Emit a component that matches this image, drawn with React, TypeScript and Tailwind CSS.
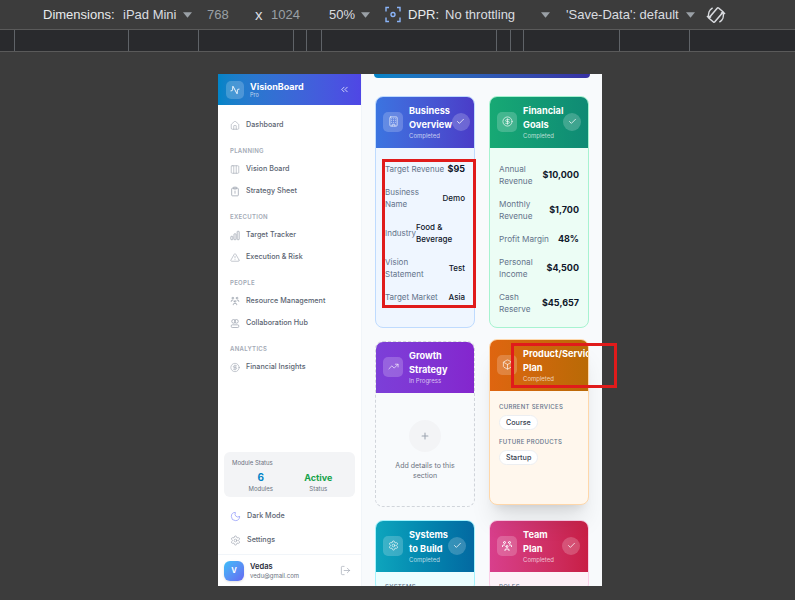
import {
  Home, Columns3, TriangleAlert, CircleDollarSign,
  Moon, Settings, LogOut, ChevronsLeft, Building, Check, TrendingUp, Box, Plus, Activity,
} from 'lucide-react';
import { TbUsersGroup } from 'react-icons/tb';
import type { ReactNode } from 'react';

const rulerStops = [15, 114, 70, 95, 13, 15, 175, 14, 13, 96, 70];

function Caret({ className = '' }: { className?: string }) {
  return (
    <svg viewBox="0 0 10 6" className={`h-[6px] w-[9px] shrink-0 fill-[#9aa0a6] ${className}`}>
      <polygon points="0,0 10,0 5,6" />
    </svg>
  );
}

function RotateIcon() {
  return (
    <svg viewBox="0 0 20 20" className="ml-[11px] h-[20px] w-[20px] shrink-0 fill-none stroke-[#dadce0] stroke-[1.5]">
      <rect x="6.5" y="3" width="7" height="14" rx="1" transform="rotate(40 10 10)" />
      <path d="M3 12.5c-1.2-3.6.2-7.6 3.6-9.6M17 7.5c1.2 3.6-.2 7.6-3.6 9.6" />
      <path d="M1 11l2 2 2-1.6M19 9l-2-2-2 1.6" />
    </svg>
  );
}

function Toolbar() {
  return (
    <div className="flex h-[30px] items-center border-b border-[#5a5a5a] text-[13px] leading-none whitespace-nowrap text-[#e8eaed]">
      <span className="ml-[43px] w-[80px]">Dimensions:</span>
      <span className="w-[60px] text-[#dadce0]">iPad Mini</span>
      <Caret />
      <span className="ml-[15px] w-[48px] text-[#9aa0a6]">768</span>
      <span className="w-[16px] text-[15px] text-[#dadce0]">x</span>
      <span className="w-[58px] text-[#9aa0a6]">1024</span>
      <span className="w-[32px] text-[#dadce0]">50%</span>
      <Caret />
      <svg viewBox="0 0 16 16" className="ml-[15px] h-[17px] w-[16px] shrink-0 fill-none stroke-[#8ab4f8] stroke-[1.4]">
        <path d="M1 5V1h3M12 1h3v4M15 11v4h-3M4 15H1v-4" />
        <circle cx="8" cy="8" r="2" />
      </svg>
      <span className="ml-[7px] w-[37px]">DPR:</span>
      <span className="w-[96px] text-[#dadce0]">No throttling</span>
      <Caret />
      <span className="ml-[16px] w-[120px] text-[#dadce0]">'Save-Data': default</span>
      <Caret />
      <RotateIcon />
    </div>
  );
}

function Ruler() {
  return (
    <div className="flex h-[22px] border-b border-[#5a5a5a] bg-[#292a2d]">
      {rulerStops.map((w, i) => (
        <div key={i} className="h-[21px] border-r border-[#5f6368]" style={{ width: w }} />
      ))}
    </div>
  );
}

function BarsIcon() {
  return (
    <svg viewBox="0 0 12 12" className="h-[11px] w-[11px] fill-none stroke-current stroke-[0.9]">
      <rect x="1" y="7" width="2.4" height="4" rx="0.5" />
      <rect x="4.8" y="4" width="2.4" height="7" rx="0.5" />
      <rect x="8.6" y="1" width="2.4" height="10" rx="0.5" />
    </svg>
  );
}

function ClipIcon() {
  return (
    <svg viewBox="0 0 12 12" className="h-[11px] w-[11px] fill-none stroke-current stroke-[0.9]">
      <rect x="2" y="2" width="8" height="9.2" rx="1" />
      <rect x="4" y="0.8" width="4" height="2.2" rx="0.5" />
      <path d="M6 5v3.6" />
    </svg>
  );
}

function CollabIcon() {
  return (
    <svg viewBox="0 0 12 12" className="h-[11px] w-[11px] fill-none stroke-current stroke-[0.9]">
      <circle cx="4.3" cy="3.4" r="2.2" />
      <circle cx="7.7" cy="3.4" r="2.2" />
      <rect x="1.5" y="7.6" width="9" height="3.2" rx="1.2" />
    </svg>
  );
}

function NavItem({ icon, label }: { icon: ReactNode; label: string }) {
  return (
    <div className="flex h-[22px] items-center gap-[6px] pl-[12px] text-[7.2px] font-medium text-[#5b6472]">
      <span className="flex w-[10px] justify-center text-[#9ca3af]">{icon}</span>
      {label}
    </div>
  );
}

function NavLabel({ children }: { children: string }) {
  return <div className="mt-[10px] mb-[2px] h-[10px] pl-[12px] text-[6px] leading-[10px] font-semibold tracking-[0.3px] text-[#a3aab5]">{children}</div>;
}

function Sidebar() {
  return (
    <aside className="flex w-[144px] shrink-0 flex-col border-r border-[#f1f5f9] bg-white">
      <div className="flex h-[31px] items-center bg-gradient-to-r from-[#0284c7] to-[#4f46e5] pr-[11px] pl-[8px]">
        <div className="flex h-[18px] w-[18px] items-center justify-center rounded-[5px] bg-white/20">
          <Activity size={10} className="-rotate-12 text-white" />
        </div>
        <div className="ml-[6px] flex-1 text-white">
          <div className="text-[9px] leading-[11px] font-bold">VisionBoard</div>
          <div className="text-[5.5px] leading-[6px] text-white/70">Pro</div>
        </div>
        <ChevronsLeft size={11} className="text-white/80" />
      </div>
      <div className="mt-[9px]">
        <NavItem icon={<Home size={11} strokeWidth={1.4} />} label="Dashboard" />
        <NavLabel>PLANNING</NavLabel>
        <NavItem icon={<Columns3 size={11} strokeWidth={1.4} />} label="Vision Board" />
        <NavItem icon={<ClipIcon />} label="Strategy Sheet" />
        <NavLabel>EXECUTION</NavLabel>
        <NavItem icon={<BarsIcon />} label="Target Tracker" />
        <NavItem icon={<TriangleAlert size={11} strokeWidth={1.4} />} label="Execution & Risk" />
        <NavLabel>PEOPLE</NavLabel>
        <NavItem icon={<TbUsersGroup size={12} />} label="Resource Management" />
        <NavItem icon={<CollabIcon />} label="Collaboration Hub" />
        <NavLabel>ANALYTICS</NavLabel>
        <NavItem icon={<CircleDollarSign size={11} strokeWidth={1.4} />} label="Financial Insights" />
      </div>
      <div className="mx-[6px] mt-auto rounded-[6px] bg-[#f3f4f6] px-[8px] pt-[7px] pb-[4px]">
        <div className="text-[6px] leading-[8px] text-[#6b7280]">Module Status</div>
        <div className="mt-[4px] grid grid-cols-2 text-center">
          <div>
            <div className="text-[10px] leading-[13px] font-bold text-[#0284c7]">6</div>
            <div className="text-[6px] leading-[9px] text-[#6b7280]">Modules</div>
          </div>
          <div>
            <div className="text-[9px] leading-[13px] font-bold text-[#16a34a]">Active</div>
            <div className="text-[6px] leading-[9px] text-[#6b7280]">Status</div>
          </div>
        </div>
      </div>
      <div className="mt-[7px] flex h-[24px] items-center gap-[6px] pl-[12px] text-[7.2px] font-medium text-[#5b6472]">
        <Moon size={11} strokeWidth={1.4} className="text-[#818cf8]" />
        Dark Mode
      </div>
      <div className="flex h-[24px] items-center gap-[6px] pl-[12px] text-[7.2px] font-medium text-[#5b6472]">
        <Settings size={11} strokeWidth={1.4} className="text-[#9ca3af]" />
        Settings
      </div>
      <div className="mt-[2px] flex h-[32px] items-center border-t border-[#f1f5f9] pr-[10px] pl-[6px]">
        <div className="flex h-[20px] w-[20px] items-center justify-center rounded-[6px] bg-gradient-to-br from-[#38bdf8] to-[#6366f1] text-[7.5px] font-bold text-white shadow-sm">
          V
        </div>
        <div className="ml-[6px] flex-1">
          <div className="text-[7.5px] leading-[9px] font-semibold text-[#1f2937]">Vedas</div>
          <div className="mt-[1px] text-[6px] leading-[8px] text-[#6b7280]">vedu@gmail.com</div>
        </div>
        <LogOut size={11} strokeWidth={1.4} className="text-[#9ca3af]" />
      </div>
    </aside>
  );
}

function CardHeader({ icon, title, status, gradient, done = true }: { icon: ReactNode; title: string; status: string; gradient: string; done?: boolean }) {
  return (
    <div className={`flex items-center pt-[6.5px] pr-[8px] pb-[8.5px] pl-[7px] text-white ${gradient}`}>
      <div className="mr-[6px] flex h-[20px] w-[20px] shrink-0 items-center justify-center rounded-[5px] bg-white/20">{icon}</div>
      <div className="flex-1">
        <div className="text-[9.2px] leading-[14px] font-bold">{title}</div>
        <div className="text-[6px] leading-[8px] text-white/70">{status}</div>
      </div>
      {done && (
        <div className="flex h-[18px] w-[18px] shrink-0 items-center justify-center rounded-full bg-white/20">
          <Check size={9} strokeWidth={2} />
        </div>
      )}
    </div>
  );
}

function Row({ label, value, labelWidth }: { label: string; value: string; labelWidth?: string }) {
  return (
    <div className="flex items-center justify-between">
      <div className={`text-[8.2px] leading-[12px] text-[#64748b] ${labelWidth ?? ''}`}>{label}</div>
      <div className="text-[9px] leading-[12px] font-bold text-[#0f172a]">{value}</div>
    </div>
  );
}

function SmallRow({ label, value, wide }: { label: string; value: string; wide?: boolean }) {
  return (
    <div className="flex items-center justify-between">
      <div className="max-w-[40px] text-[8px] leading-[12px] text-[#64748b]">{label}</div>
      <div className={`text-[8px] leading-[12px] font-medium text-[#0f172a] ${wide ? 'w-[49px]' : ''}`}>{value}</div>
    </div>
  );
}

function Tag({ children }: { children: string }) {
  return <span className="rounded-full border border-[#eceef1] bg-white px-[6px] text-[7.2px] leading-[13px] font-medium text-[#374151]">{children}</span>;
}

function TagLabel({ children, className = '' }: { children: string; className?: string }) {
  return <div className={`text-[6px] leading-[8px] font-medium tracking-[0.3px] text-[#64748b] ${className}`}>{children}</div>;
}

function Dashboard() {
  return (
    <main className="flex-1 overflow-hidden bg-[#f8fafc]">
      <div className="mx-[12px] h-[4px] rounded-b-[8px] bg-gradient-to-r from-[#0284c7] to-[#3730a3]" />
      <div className="mt-[18px] grid grid-cols-2 gap-x-[14px] gap-y-[13px] px-[13px]">
        <section className="overflow-hidden rounded-[8px] border border-[#bfdbfe] bg-[#eff6ff]">
          <CardHeader
            icon={<Building size={11} strokeWidth={1.4} />}
            title="Business Overview"
            status="Completed"
            gradient="bg-gradient-to-r from-[#3b74e0] to-[#4a3cc8]"
          />
          <div className="flex flex-col gap-[11px] px-[9px] pt-[15px] pb-[13px]">
            <div className="flex items-center justify-between">
              <div className="text-[8px] leading-[12px] text-[#64748b]">Target Revenue</div>
              <div className="text-[9px] leading-[12px] font-bold text-[#0f172a]">$95</div>
            </div>
            <SmallRow label="Business Name" value="Demo" />
            <SmallRow label="Industry" value="Food & Beverage" wide />
            <SmallRow label="Vision Statement" value="Test" />
            <div className="flex items-center justify-between">
              <div className="text-[8px] leading-[12px] text-[#64748b]">Target Market</div>
              <div className="text-[8px] leading-[12px] font-medium text-[#0f172a]">Asia</div>
            </div>
          </div>
        </section>

        <section className="overflow-hidden rounded-[8px] border border-[#a7f3d0] bg-[#ecfdf5]">
          <CardHeader
            icon={<CircleDollarSign size={11} strokeWidth={1.4} />}
            title="Financial Goals"
            status="Completed"
            gradient="bg-gradient-to-r from-[#17a974] to-[#0f8a74]"
          />
          <div className="flex flex-col gap-[11px] px-[9px] pt-[15px] pb-[12px]">
            <Row label="Annual Revenue" value="$10,000" labelWidth="max-w-[40px]" />
            <Row label="Monthly Revenue" value="$1,700" labelWidth="max-w-[40px]" />
            <Row label="Profit Margin" value="48%" />
            <Row label="Personal Income" value="$4,500" labelWidth="max-w-[40px]" />
            <Row label="Cash Reserve" value="$45,657" labelWidth="max-w-[30px]" />
          </div>
        </section>

        <section className="overflow-hidden rounded-[8px] border border-dashed border-[#d1d5db]">
          <CardHeader
            icon={<TrendingUp size={11} strokeWidth={1.4} />}
            title="Growth Strategy"
            status="In Progress"
            gradient="bg-gradient-to-r from-[#7c3fd8] to-[#8426ce]"
            done={false}
          />
          <div className="flex h-[113px] flex-col items-center pt-[27px]">
            <div className="flex h-[32px] w-[32px] items-center justify-center rounded-full bg-[#f3f4f6] text-[#9ca3af]">
              <Plus size={10} strokeWidth={2.5} />
            </div>
            <p className="mt-[9px] w-[76px] text-center text-[7px] leading-[10px] text-[#6b7280]">Add details to this section</p>
          </div>
        </section>

        <section className="-translate-y-0.5 overflow-hidden rounded-[8px] border border-[#fed7aa] bg-[#fff7ed] shadow-xl shadow-black/10">
          <CardHeader
            icon={<Box size={11} strokeWidth={1.4} />}
            title="Product/Service Plan"
            status="Completed"
            gradient="bg-gradient-to-r from-[#df6510] to-[#b96a06]"
          />
          <div className="px-[9px] pt-[12px]">
            <TagLabel>CURRENT SERVICES</TagLabel>
            <div className="mt-[3.5px] flex">
              <Tag>Course</Tag>
            </div>
            <TagLabel className="mt-[8px]">FUTURE PRODUCTS</TagLabel>
            <div className="mt-[4px] flex">
              <Tag>Startup</Tag>
            </div>
          </div>
        </section>

        <section className="overflow-hidden rounded-[8px] border border-[#a5f3fc] bg-[#ecfeff]">
          <CardHeader
            icon={<Settings size={11} strokeWidth={1.4} />}
            title="Systems to Build"
            status="Completed"
            gradient="bg-gradient-to-r from-[#0ea5bd] to-[#0369a1]"
          />
          <div className="px-[9px] pt-[11px]">
            <TagLabel>SYSTEMS</TagLabel>
          </div>
        </section>

        <section className="overflow-hidden rounded-[8px] border border-[#fbcfe8] bg-[#fdf2f8]">
          <CardHeader
            icon={<TbUsersGroup size={12} />}
            title="Team Plan"
            status="Completed"
            gradient="bg-gradient-to-r from-[#d83f8c] to-[#c81e45]"
          />
          <div className="px-[9px] pt-[11px]">
            <TagLabel>ROLES</TagLabel>
          </div>
        </section>
      </div>
    </main>
  );
}

export default function App() {
  return (
    <div className="relative h-[600px] w-[795px] overflow-hidden bg-[#3c3c3c] font-['Inter',sans-serif]">
      <div className="font-['Liberation_Sans',sans-serif]">
        <Toolbar />
        <Ruler />
      </div>
      <div className="mt-[22px] ml-[218px] flex h-[512px] w-[384px]">
        <Sidebar />
        <Dashboard />
      </div>
      <div className="absolute top-[159px] left-[382px] h-[149px] w-[94px] border-[3px] border-[#e01b1b]" />
      <div className="absolute top-[343px] left-[511px] h-[45px] w-[106px] border-[3px] border-[#e01b1b]" />
    </div>
  );
}
